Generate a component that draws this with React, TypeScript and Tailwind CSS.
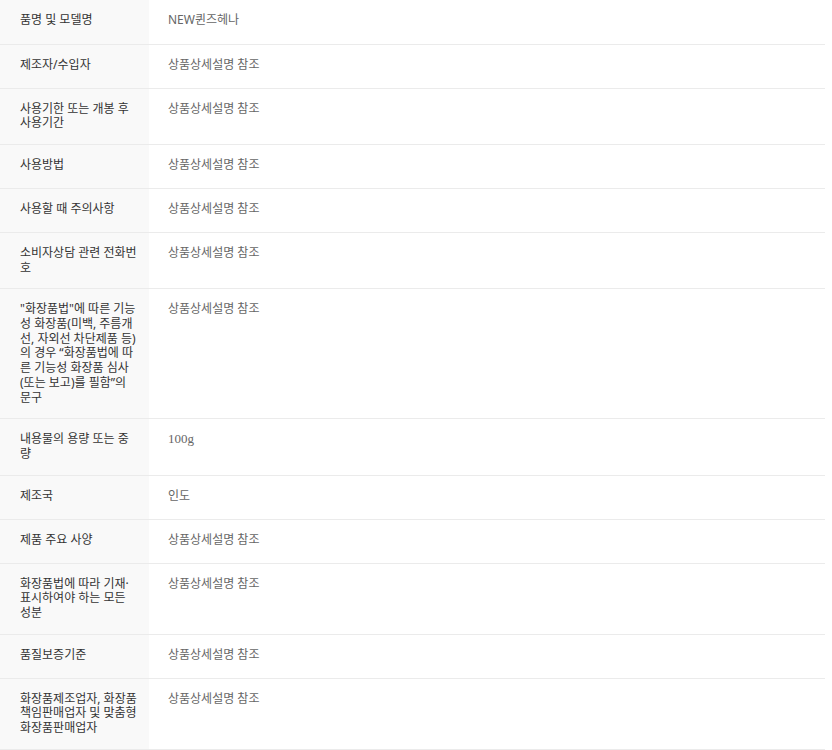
import React from 'react'

type Row = {
    label: string
    value: string
    serif?: boolean
}

// 라벨 줄바꿈은 원본 표와 같게 맞춤
const rows: Row[] = [
    { label: '품명 및 모델명', value: 'NEW퀸즈헤나' },
    { label: '제조자/수입자', value: '상품상세설명 참조' },
    { label: '사용기한 또는 개봉 후\n사용기간', value: '상품상세설명 참조' },
    { label: '사용방법', value: '상품상세설명 참조' },
    { label: '사용할 때 주의사항', value: '상품상세설명 참조' },
    { label: '소비자상담 관련 전화번\n호', value: '상품상세설명 참조' },
    {
        label: '"화장품법"에 따른 기능\n성 화장품(미백, 주름개\n선, 자외선 차단제품 등)\n의 경우 “화장품법에 따\n른 기능성 화장품 심사\n(또는 보고)를 필함”의\n문구',
        value: '상품상세설명 참조',
    },
    { label: '내용물의 용량 또는 중\n량', value: '100g', serif: true },
    { label: '제조국', value: '인도' },
    { label: '제품 주요 사양', value: '상품상세설명 참조' },
    { label: '화장품법에 따라 기재·\n표시하여야 하는 모든\n성분', value: '상품상세설명 참조' },
    { label: '품질보증기준', value: '상품상세설명 참조' },
    { label: '화장품제조업자, 화장품\n책임판매업자 및 맞춤형\n화장품판매업자', value: '상품상세설명 참조' },
]

export default function App() {
    return (
        <div className="min-h-[750px] w-[832px] bg-white font-['Noto_Sans','Noto_Sans_CJK_KR',sans-serif]">
            <table className="w-[825px] table-fixed border-collapse">
                <tbody>
                    {rows.map((row) => (
                        <tr key={row.label} className="border-b border-[#ebebeb]">
                            <th className="h-[44px] w-[149px] bg-[#f9f9f9] pt-[13px] pr-[6px] pb-[13px] pl-[20px] text-left align-top text-[12px] leading-[14.7px] font-normal whitespace-pre-line text-[#333]">
                                {row.label}
                            </th>
                            <td className="h-[44px] pt-[13px] pb-[13px] pl-[19px] align-top text-[12px] leading-[14.7px] text-[#666]">
                                {row.serif ? (
                                    <span className="font-['Liberation_Serif',serif] text-[13px]">
                                        {row.value}
                                    </span>
                                ) : (
                                    row.value
                                )}
                            </td>
                        </tr>
                    ))}
                </tbody>
            </table>
        </div>
    )
}
